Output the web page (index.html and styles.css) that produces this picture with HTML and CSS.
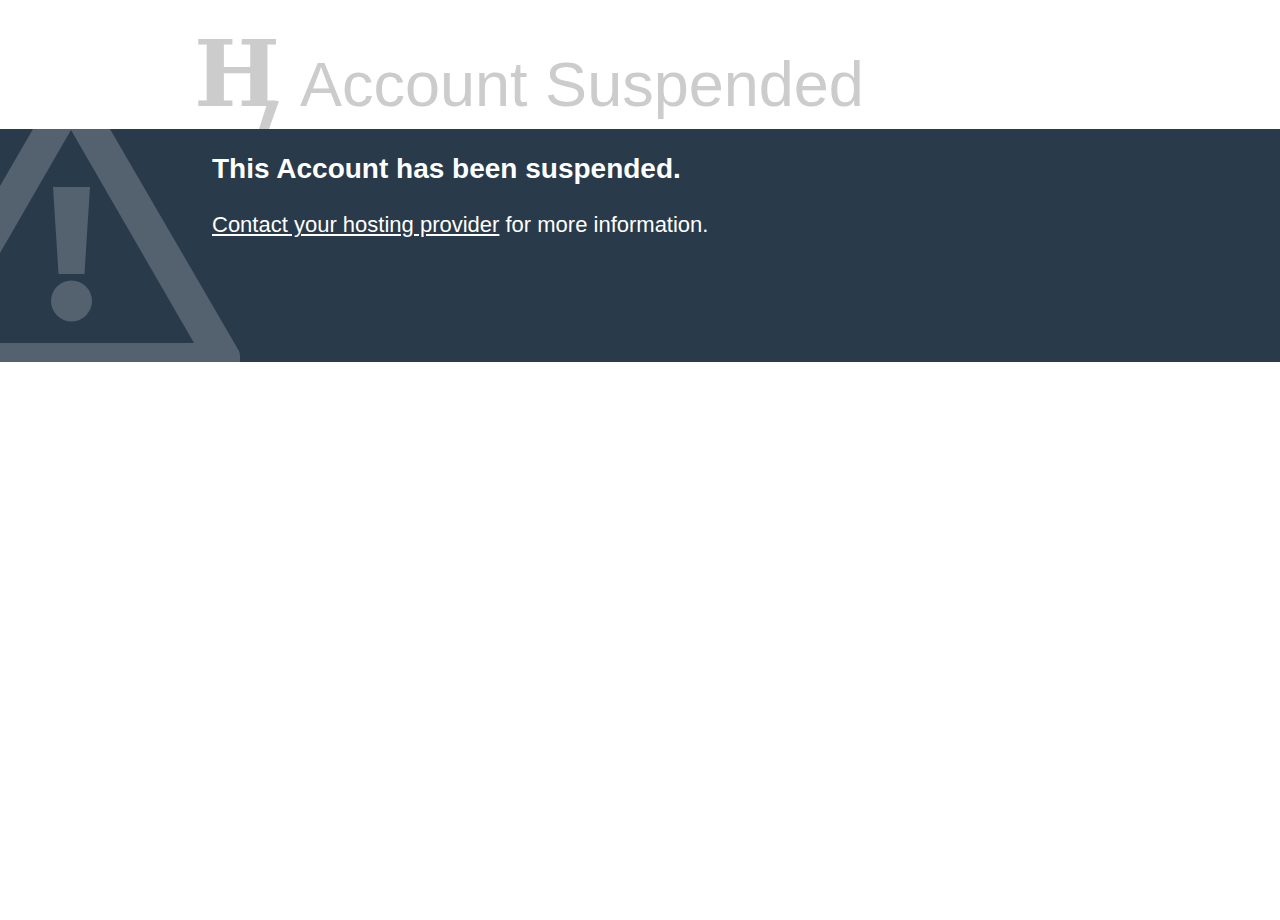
FILE: index.html
```html
<!DOCTYPE html>
<html lang="en">
<head>
    <meta charset="UTF-8">
    <meta name="viewport" content="width=device-width, initial-scale=1.0">
    <title>Account Suspended</title>
    <link rel="stylesheet" href="styles.css">
</head>
<body>
    <!-- Status heading -->
    <header class="status">
        <span class="status-icon">H</span>
        <h1 class="status-reason">Account Suspended</h1>
    </header>

    <!-- Details -->
    <section class="info">
        <svg class="info-icon" viewBox="0 0 240 233" aria-hidden="true">
            <path fill-rule="evenodd" d="M33 0H110L239 222Q240 224 240 227V233H0V214H194L71 1L0 124V57Z"/>
            <path d="M53 58H90L84.500 145H58.500Z"/>
            <circle cx="71.500" cy="172" r="20.500"/>
        </svg>
        <div class="info-text">
            <h2 class="info-heading">This Account has been suspended.</h2>
            <p><a href="#">Contact your hosting provider</a> for more information.</p>
        </div>
    </section>
</body>
</html>
```

FILE: styles.css
```css
/* Reset styles */
* {
    margin: 0;
    padding: 0;
    box-sizing: border-box;
}

body {
    font-family: "Liberation Sans", Arial, Helvetica, sans-serif;
    background-color: #fff;
    color: #ccc;
}

/* Status heading */
.status {
    display: flex;
    align-items: baseline;
    gap: 20px;
    padding: 24px 15% 0;
}

.status-icon {
    position: relative;
    height: 105px;
    padding-left: 2px;
    font-family: "DejaVu Serif", serif;
    font-size: 91px;
    font-weight: bold;
    line-height: 100px;
}

/* Slanted tail under the right foot */
.status-icon::after {
    content: "";
    position: absolute;
    right: 1px;
    bottom: 0;
    width: 20px;
    height: 28px;
    background-color: #ccc;
    clip-path: polygon(45% 0, 100% 0, 50% 100%, 0 100%);
}

.status-reason {
    font-size: 63px;
    font-weight: normal;
    line-height: 72px;
}

/* Details */
.info {
    position: relative;
    min-height: 233px;
    padding: 23px 15%;
    background-color: #293a4a;
    color: #fff;
}

.info-icon {
    position: absolute;
    top: 0;
    left: 0;
    width: 240px;
    height: 233px;
    fill: #54616e;
}

.info-text {
    position: relative;
    padding-left: 20px;
    font-size: 22px;
    line-height: 32px;
}

.info-heading {
    margin-bottom: 23px;
    font-size: 28px;
    line-height: 34px;
}

.info-text a {
    color: inherit;
}
```
